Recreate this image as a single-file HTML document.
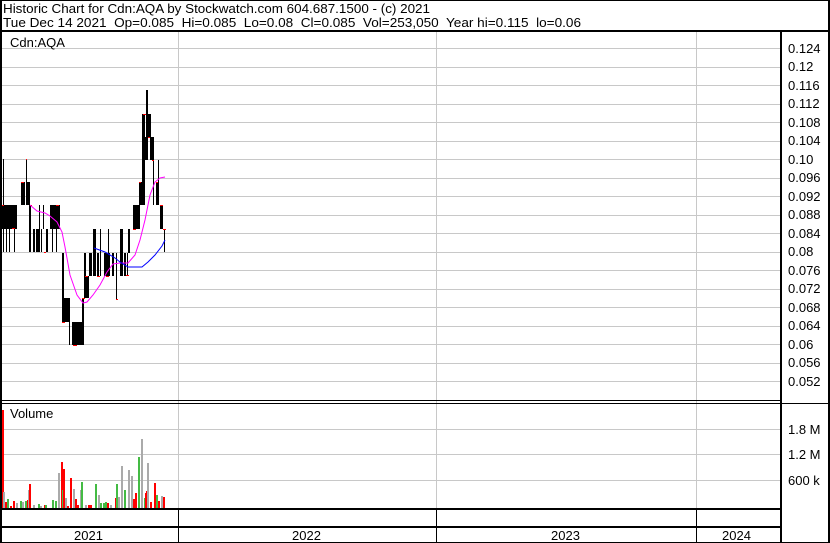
<!DOCTYPE html>
<html><head><meta charset="utf-8"><style>
html,body{margin:0;padding:0;background:#fff;}
svg{display:block;}
text{font-family:"Liberation Sans",Arial,sans-serif;fill:#000;}
</style></head><body>
<svg width="830" height="543" viewBox="0 0 830 543" xmlns="http://www.w3.org/2000/svg" shape-rendering="crispEdges">
<rect x="0" y="0" width="830" height="543" fill="#fff"/>
<text x="3" y="13" font-size="13" textLength="427" lengthAdjust="spacingAndGlyphs">Historic Chart for Cdn:AQA by Stockwatch.com 604.687.1500 - (c) 2021</text>
<text x="3" y="27" font-size="13" textLength="578" lengthAdjust="spacingAndGlyphs" xml:space="preserve">Tue Dec 14 2021  Op=0.085  Hi=0.085  Lo=0.08  Cl=0.085  Vol=253,050  Year hi=0.115  lo=0.06</text>
<g stroke="#c8c8c8" stroke-width="1">
<line x1="2" y1="48.5" x2="780" y2="48.5"/><line x1="2" y1="67.5" x2="780" y2="67.5"/><line x1="2" y1="85.5" x2="780" y2="85.5"/><line x1="2" y1="104.5" x2="780" y2="104.5"/><line x1="2" y1="122.5" x2="780" y2="122.5"/><line x1="2" y1="141.5" x2="780" y2="141.5"/><line x1="2" y1="159.5" x2="780" y2="159.5"/><line x1="2" y1="178.5" x2="780" y2="178.5"/><line x1="2" y1="196.5" x2="780" y2="196.5"/><line x1="2" y1="215.5" x2="780" y2="215.5"/><line x1="2" y1="233.5" x2="780" y2="233.5"/><line x1="2" y1="252.5" x2="780" y2="252.5"/><line x1="2" y1="270.5" x2="780" y2="270.5"/><line x1="2" y1="289.5" x2="780" y2="289.5"/><line x1="2" y1="307.5" x2="780" y2="307.5"/><line x1="2" y1="326.5" x2="780" y2="326.5"/><line x1="2" y1="344.5" x2="780" y2="344.5"/><line x1="2" y1="363.5" x2="780" y2="363.5"/><line x1="2" y1="381.5" x2="780" y2="381.5"/>
<line x1="2" y1="429.5" x2="780" y2="429.5"/><line x1="2" y1="454.5" x2="780" y2="454.5"/><line x1="2" y1="480.5" x2="780" y2="480.5"/>
<line x1="178.5" y1="32" x2="178.5" y2="509"/><line x1="436.5" y1="32" x2="436.5" y2="509"/><line x1="696.5" y1="32" x2="696.5" y2="509"/>
</g>
<g fill="#000">
<rect x="2" y="205" width="10" height="24"/><rect x="3" y="159" width="1" height="93"/><rect x="6" y="229" width="1" height="23"/><rect x="9" y="229" width="1" height="23"/>
<rect x="12" y="205" width="5" height="24"/><rect x="14" y="229" width="1" height="23"/>
<rect x="21" y="182" width="4" height="23"/><rect x="26" y="159" width="1" height="46"/><rect x="27" y="182" width="3" height="23"/>
<rect x="29" y="205" width="2" height="47"/><rect x="33" y="229" width="2" height="23"/><rect x="36" y="229" width="3" height="23"/><rect x="39" y="205" width="1" height="47"/><rect x="41" y="229" width="1" height="23"/><rect x="43" y="205" width="1" height="24"/>
<rect x="46" y="229" width="2" height="23"/><rect x="50" y="205" width="10" height="24"/><rect x="52" y="229" width="1" height="23"/><rect x="56" y="229" width="1" height="23"/>
<rect x="62" y="253" width="2" height="69"/><rect x="63" y="298" width="7" height="24"/><rect x="69" y="298" width="1" height="47"/>
<rect x="72" y="322" width="10" height="23"/><rect x="82" y="298" width="2" height="47"/>
<rect x="84" y="253" width="2" height="45"/><rect x="86" y="276" width="3" height="22"/><rect x="89" y="253" width="2" height="23"/><rect x="91" y="253" width="1" height="23"/><rect x="93" y="229" width="3" height="47"/><rect x="97" y="253" width="2" height="23"/><rect x="100" y="229" width="1" height="47"/><rect x="104" y="253" width="6" height="23"/><rect x="108" y="229" width="1" height="24"/><rect x="116" y="253" width="1" height="47"/>
<rect x="112" y="253" width="2" height="23"/><rect x="120" y="229" width="3" height="47"/><rect x="124" y="253" width="2" height="23"/><rect x="127" y="253" width="1" height="23"/><rect x="128" y="229" width="2" height="24"/>
<rect x="133" y="205" width="7" height="24"/><rect x="139" y="182" width="3" height="23"/><rect x="142" y="114" width="3" height="91"/><rect x="145" y="137" width="3" height="23"/><rect x="146" y="90" width="2" height="47"/><rect x="148" y="114" width="3" height="23"/>
<rect x="150" y="137" width="4" height="23"/><rect x="153" y="160" width="1" height="45"/><rect x="156" y="182" width="2" height="23"/><rect x="158" y="160" width="1" height="45"/><rect x="160" y="205" width="3" height="24"/><rect x="164" y="229" width="1" height="23"/>
</g>
<g fill="#f00">
<rect x="2" y="205" width="2" height="1"/><rect x="12" y="228" width="3" height="1"/><rect x="21" y="182" width="3" height="1"/><rect x="26" y="159" width="1" height="1"/><rect x="30" y="205" width="2" height="1"/><rect x="44" y="252" width="2" height="1"/><rect x="56" y="205" width="3" height="1"/><rect x="62" y="322" width="3" height="1"/><rect x="73" y="345" width="4" height="1"/><rect x="82" y="298" width="3" height="1"/><rect x="85" y="276" width="3" height="1"/><rect x="97" y="276" width="3" height="1"/><rect x="106" y="276" width="3" height="1"/><rect x="116" y="299" width="2" height="1"/><rect x="126" y="275" width="3" height="1"/><rect x="133" y="229" width="3" height="1"/><rect x="139" y="182" width="2" height="1"/><rect x="143" y="114" width="3" height="1"/><rect x="148" y="137" width="2" height="1"/><rect x="152" y="160" width="2" height="1"/><rect x="156" y="182" width="2" height="1"/><rect x="160" y="205" width="3" height="1"/><rect x="163" y="229" width="3" height="1"/>
</g>
<path d="M30 205 L37 211 L45 213 L50 216 L57 222 L62 232 L65 247 L70 275 L77 295 L83 303 L87 302 L93 295 L100 285 L107 272 L113 264 L120 263 L128 263 L135 255 L140 240 L145 220 L150 195 L155 182 L160 178 L165 177" fill="none" stroke="#f0f" stroke-width="1" shape-rendering="auto"/>
<path d="M94 248 L105 252 L115 258 L120 262 L128 267 L142 267 L148 262 L155 255 L162 246 L165 240" fill="none" stroke="#00f" stroke-width="1" shape-rendering="auto"/>
<text x="10" y="47" font-size="13">Cdn:AQA</text>
<text x="10" y="418" font-size="13">Volume</text>
<g>
<rect x="0" y="463" width="2" height="46" fill="#aaa"/><rect x="2" y="410" width="2" height="99" fill="#f00"/><rect x="3" y="492" width="2" height="17" fill="#aaa"/>
<rect x="5" y="502" width="2" height="7" fill="#f00"/><rect x="7" y="499" width="2" height="10" fill="#4b4"/><rect x="10" y="506" width="2" height="3" fill="#f00"/><rect x="13" y="501" width="2" height="8" fill="#f00"/><rect x="16" y="503" width="2" height="6" fill="#aaa"/><rect x="20" y="501" width="2" height="8" fill="#4b4"/><rect x="22" y="502" width="2" height="7" fill="#aaa"/><rect x="25" y="501" width="2" height="8" fill="#4b4"/><rect x="27" y="500" width="1" height="9" fill="#f00"/>
<rect x="28" y="490" width="1" height="19" fill="#aaa"/><rect x="29" y="484" width="2" height="25" fill="#f00"/><rect x="33" y="505" width="2" height="4" fill="#aaa"/><rect x="38" y="504" width="2" height="5" fill="#4b4"/><rect x="40" y="506" width="2" height="3" fill="#aaa"/><rect x="44" y="505" width="1" height="4" fill="#f00"/><rect x="45" y="505" width="2" height="4" fill="#4b4"/>
<rect x="52" y="500" width="2" height="9" fill="#4b4"/><rect x="55" y="501" width="2" height="8" fill="#4b4"/><rect x="58" y="473" width="2" height="36" fill="#aaa"/><rect x="61" y="462" width="2" height="47" fill="#f00"/><rect x="62" y="490" width="1" height="19" fill="#4b4"/><rect x="63" y="469" width="2" height="40" fill="#f00"/><rect x="65" y="498" width="2" height="11" fill="#aaa"/><rect x="67" y="506" width="2" height="3" fill="#f00"/>
<rect x="70" y="478" width="2" height="31" fill="#f00"/><rect x="73" y="489" width="2" height="20" fill="#aaa"/><rect x="75" y="499" width="2" height="10" fill="#f00"/><rect x="77" y="505" width="2" height="4" fill="#f00"/><rect x="80" y="490" width="2" height="19" fill="#aaa"/><rect x="81" y="482" width="2" height="27" fill="#4b4"/>
<rect x="85" y="505" width="2" height="4" fill="#aaa"/><rect x="88" y="505" width="2" height="4" fill="#f00"/><rect x="90" y="505" width="2" height="4" fill="#f00"/><rect x="95" y="484" width="2" height="25" fill="#4b4"/><rect x="98" y="495" width="2" height="14" fill="#aaa"/><rect x="100" y="503" width="2" height="6" fill="#4b4"/><rect x="103" y="503" width="2" height="6" fill="#4b4"/><rect x="105" y="502" width="2" height="7" fill="#4b4"/><rect x="107" y="503" width="2" height="6" fill="#f00"/><rect x="110" y="505" width="2" height="4" fill="#aaa"/>
<rect x="115" y="498" width="2" height="11" fill="#f00"/><rect x="116" y="484" width="2" height="25" fill="#4b4"/><rect x="118" y="497" width="2" height="12" fill="#aaa"/><rect x="121" y="466" width="2" height="43" fill="#aaa"/><rect x="124" y="490" width="2" height="19" fill="#4b4"/><rect x="128" y="470" width="2" height="39" fill="#aaa"/><rect x="131" y="476" width="2" height="33" fill="#aaa"/><rect x="133" y="499" width="2" height="10" fill="#f00"/><rect x="135" y="493" width="2" height="16" fill="#f00"/>
<rect x="138" y="457" width="2" height="52" fill="#4b4"/><rect x="141" y="439" width="2" height="70" fill="#aaa"/><rect x="144" y="498" width="1" height="11" fill="#4b4"/><rect x="145" y="493" width="1" height="16" fill="#f00"/><rect x="146" y="491" width="1" height="18" fill="#f00"/><rect x="147" y="463" width="2" height="46" fill="#aaa"/>
<rect x="150" y="502" width="2" height="7" fill="#f00"/><rect x="154" y="483" width="2" height="26" fill="#f00"/><rect x="156" y="495" width="2" height="14" fill="#4b4"/><rect x="158" y="501" width="2" height="8" fill="#f00"/><rect x="161" y="496" width="2" height="13" fill="#aaa"/><rect x="163" y="497" width="2" height="12" fill="#f00"/>
</g>
<g fill="#000">
<rect x="0" y="0" width="830" height="1"/><rect x="0" y="542" width="830" height="1"/><rect x="0" y="0" width="2" height="543"/><rect x="828" y="0" width="2" height="543"/>
<rect x="0" y="30" width="830" height="2"/>
<rect x="780" y="31" width="2" height="512"/>
<rect x="0" y="400" width="782" height="1"/><rect x="0" y="403" width="830" height="1"/>
<rect x="0" y="508" width="782" height="2"/><rect x="0" y="526" width="782" height="2"/>
</g>
<g stroke="#000" stroke-width="1"><line x1="178.5" y1="510" x2="178.5" y2="542"/><line x1="436.5" y1="510" x2="436.5" y2="542"/><line x1="696.5" y1="510" x2="696.5" y2="542"/></g>
<g font-size="13">
<text x="788" y="53">0.124</text><text x="788" y="71">0.12</text><text x="788" y="90">0.116</text><text x="788" y="108">0.112</text><text x="788" y="127">0.108</text><text x="788" y="145">0.104</text><text x="788" y="164">0.10</text><text x="788" y="182">0.096</text><text x="788" y="201">0.092</text><text x="788" y="219">0.088</text><text x="788" y="238">0.084</text><text x="788" y="256">0.08</text><text x="788" y="275">0.076</text><text x="788" y="293">0.072</text><text x="788" y="312">0.068</text><text x="788" y="330">0.064</text><text x="788" y="349">0.06</text><text x="788" y="367">0.056</text><text x="788" y="386">0.052</text>
<text x="788" y="434">1.8 M</text><text x="788" y="459">1.2 M</text><text x="788" y="485">600 k</text>
<text x="74" y="540">2021</text><text x="292" y="540">2022</text><text x="551" y="540">2023</text><text x="722" y="540">2024</text>
</g>
</svg>
</body></html>
